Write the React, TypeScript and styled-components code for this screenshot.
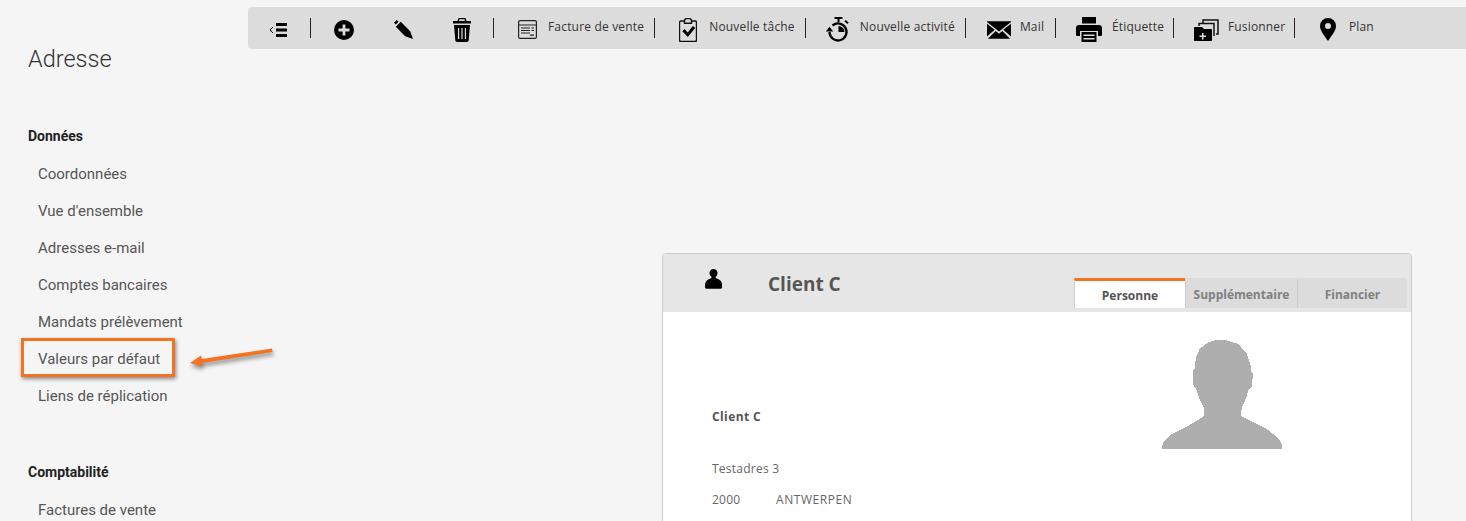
import * as React from "react"
import styled, { createGlobalStyle } from "styled-components"

const GlobalStyle = createGlobalStyle`
  html, body {
    margin: 0;
    padding: 0;
    background: #f5f5f5;
  }
`

const Page = styled.div`
  display: grid;
  grid-template-columns: 248px 1fr;
  height: 521px;
  overflow: hidden;
  background: #f5f5f5;
`

const Sidebar = styled.aside`
  position: relative;
  padding: 43px 0 0 28px;
  font-family: Roboto, sans-serif;
`

const PageTitle = styled.h1`
  margin: 0 0 51px;
  font-size: 23.5px;
  line-height: 32px;
  font-weight: 300;
  color: #333;
`

const SectionTitle = styled.h2`
  margin: 0;
  font-size: 14px;
  line-height: 20px;
  font-weight: 700;
  color: #222;
`

const NavList = styled.ul`
  list-style: none;
  margin: 10px 0 47px;
  padding: 0;
`

const NavItem = styled.li<{ $marked?: boolean }>`
  position: relative;
  padding-left: 10px;
  font-size: 15px;
  line-height: 37px;
  color: #555;

  ${({ $marked }) =>
    $marked &&
    `
    &::after {
      content: "";
      position: absolute;
      left: -7px;
      top: -3px;
      width: 148px;
      height: 33px;
      border: 3px solid #f47321;
      box-shadow: 1px 2px 4px rgba(0, 0, 0, 0.45);
    }
  `}
`

const Arrow = styled.svg`
  position: absolute;
  left: 184px;
  top: 343px;
  overflow: visible;
  filter: drop-shadow(1px 3px 2px rgba(0, 0, 0, 0.45));
`

const Main = styled.main`
  display: flex;
  flex-direction: column;
  align-items: flex-start;
  padding-top: 7px;
`

const Toolbar = styled.div`
  display: flex;
  align-items: center;
  width: 100%;
  height: 42px;
  background: #dcdcdc;
  border-radius: 4px 0 0 4px;
  font-family: "Open Sans", sans-serif;
  font-size: 12px;
  color: #333;
`

const Separator = styled.span<{ $offset?: number }>`
  flex: none;
  width: 1px;
  height: 20px;
  margin-left: ${({ $offset }) => $offset ?? 0}px;
  background: #222;
`

const IconGroup = styled.div`
  display: flex;
  padding-left: 3.5px;
`

const IconSlot = styled.span<{ $width: number }>`
  display: flex;
  flex: none;
  align-items: center;
  justify-content: center;
  width: ${({ $width }) => $width}px;
  height: 42px;
  padding-top: 3px;
  box-sizing: border-box;
`

const ToolButton = styled.div`
  display: flex;
  align-items: center;
  padding: 0 10px 0 13px;
`

const ToolLabel = styled.span<{ $gap: number; $width?: number }>`
  width: ${({ $width }) => ($width ? `${$width}px` : "auto")};
  margin: 0 0 4px ${({ $gap }) => $gap}px;
  white-space: nowrap;
  letter-spacing: 0.18px;
`

const Card = styled.section`
  width: 750px;
  height: 300px;
  margin: 204px 0 0 414px;
  flex: none;
  box-sizing: border-box;
  background: #fff;
  border: 1px solid #ccc;
  border-radius: 4px 4px 0 0;
  font-family: "Open Sans", sans-serif;
`

const CardHeader = styled.header`
  display: flex;
  align-items: flex-start;
  height: 58px;
  background: #e6e6e6;
  border-radius: 3px 3px 0 0;
`

const CardIcon = styled.span`
  display: flex;
  flex: none;
  justify-content: center;
  width: 101px;
  padding-top: 15px;
`

const CardTitle = styled.h2`
  flex: 1;
  margin: 16px 0 0 4px;
  font-size: 19px;
  line-height: 28px;
  font-weight: 700;
  color: #555;
`

const Tabs = styled.div`
  display: flex;
  margin: 24px 4px 0 0;
`

const Tab = styled.div<{ $active?: boolean; $width: number }>`
  width: ${({ $width }) => $width}px;
  height: 30px;
  box-sizing: border-box;
  border-top: 3px solid ${({ $active }) => ($active ? "#f47321" : "#dcdcdc")};
  border-left: 1px solid #ccc;
  background: ${({ $active }) => ($active ? "#fff" : "#dcdcdc")};
  color: ${({ $active }) => ($active ? "#555" : "#808080")};
  font-size: 12px;
  font-weight: 700;
  line-height: ${({ $active }) => ($active ? 30 : 28)}px;
  text-align: center;
  white-space: nowrap;
`

const CardBody = styled.div`
  display: flex;
  justify-content: space-between;
  align-items: flex-start;
  padding: 28px 129px 0 49px;
`

const Address = styled.div`
  padding-top: 68px;
  font-size: 12px;
  color: #666;
  letter-spacing: 0.25px;
`

const ClientName = styled.div`
  margin-bottom: 34px;
  line-height: 18px;
  font-weight: 700;
  color: #555;
  letter-spacing: 0.4px;
`

const AddressLine = styled.div`
  display: flex;
  line-height: 18px;
  margin-bottom: 13px;
`

const PostCode = styled.span`
  width: 64px;
`

const City = styled.span`
  letter-spacing: 0.55px;
`

const Iconic = styled.svg`
  display: block;
  flex: none;
  fill: #000;
`

const Silhouette = styled.svg`
  display: block;
  fill: #aeaeae;
`

const BackIcon = () => (
  <Iconic width="18" height="14" viewBox="0 0 18 14">
    <path d="M4 4 1 7l3 3" fill="none" stroke="#000" strokeWidth="1" />
    <path d="M7 0h11v3H7zM7 5.500h11v3H7zM7 11h11v3H7z" />
  </Iconic>
)

const PlusIcon = () => (
  <Iconic width="20" height="20" viewBox="0 0 20 20">
    <path d="M10 0a10 10 0 1 0 0 20 10 10 0 0 0 0-20zm1.400 4.500v4.100h4.100v2.800h-4.100v4.100H8.600v-4.100H4.500V8.600h4.100V4.500z" fillRule="evenodd" />
  </Iconic>
)

const PencilIcon = () => (
  <Iconic width="19" height="19" viewBox="0 0 19 19">
    <path d="M2.800 0 0 2.800 1.800 4.600l2.800-2.800zM6.800 1.800 1.800 6.800l9.400 9.400L19 19l-2.800-7.800z" />
  </Iconic>
)

const TrashIcon = () => (
  <Iconic width="18" height="24" viewBox="0 0 18 24">
    <path d="M5.500 0h7l1 3H18v2.500H0V3h4.500zM6.500 1.200 6 3h6l-.5-1.800zM1 7h16l-1.300 15.300c-.1 1-.8 1.700-1.800 1.700H4.100c-1 0-1.700-.7-1.800-1.700zm4 3v11h1.200V10zm3.400 0v11h1.200V10zm3.400 0v11H13V10z" fillRule="evenodd" />
  </Iconic>
)

const InvoiceIcon = () => (
  <Iconic width="19" height="19" viewBox="0 0 19 19">
    <rect x=".6" y=".6" width="17.800" height="17.800" rx="1.500" fill="none" stroke="#222" strokeWidth="1.200" />
    <path d="M1 4.500h17v1H1zM3 7.500h9v1H3zM13.500 7.500H16v1h-2.500zM3 10h9v1H3zM13.500 10H16v1h-2.500zM3 12.500h9v1H3zM12 14.500h4v1.200h-4z" fill="#222" />
  </Iconic>
)

const TaskIcon = () => (
  <Iconic width="18" height="24" viewBox="0 0 18 24">
    <path d="M5.500 3H2a1.500 1.500 0 0 0-1.500 1.500V22A1.500 1.500 0 0 0 2 23.500h14a1.500 1.500 0 0 0 1.500-1.500V4.500A1.500 1.500 0 0 0 16 3h-3.500" fill="none" stroke="#111" strokeWidth="1.400" />
    <path d="M5.500 3c0-1.400.8-2.400 2-2.400h3c1.200 0 2 1 2 2.400v2.200h-7z" fill="none" stroke="#111" strokeWidth="1.400" />
    <path d="m3.300 13.300 2.200-2.200 3.200 3.300 5.200-6.300 2.300 1.900-7.400 9z" />
  </Iconic>
)

const TimerIcon = () => (
  <Iconic width="25" height="26" viewBox="0 0 25 26">
    <path d="M8.500 0h8v2h-3v3h-2V2h-3z" />
    <path d="M6.500 8.500A8.500 8.500 0 1 1 3.500 15" fill="none" stroke="#000" strokeWidth="2.300" />
    <path d="M12.500 15V9a6 6 0 0 1 6 6z" />
    <path d="M-.2 14.500h7.400L3.500 9.800z" />
    <path d="m19.700 3 3 2.600-1.300 1.500-3-2.600z" />
  </Iconic>
)

const MailIcon = () => (
  <Iconic width="24" height="18" viewBox="0 0 25 18">
    <path d="M0 .6 12.500 10.500 25 .6V0H0zM0 2.500V15.800L8 8.800zM25 2.500V15.800L17 8.800zM1 18h23l-8-8-3.500 3L9 10z" />
  </Iconic>
)

const PrinterIcon = () => (
  <Iconic width="26" height="25" viewBox="0 0 26 25">
    <path d="M6 0h14v6.500H6zM3 8h20c1.700 0 3 1.300 3 3v7a1 1 0 0 1-1 1h-3v-5H4v5H1a1 1 0 0 1-1-1v-7c0-1.700 1.300-3 3-3zM5.500 15h15v10h-15zM7.500 17.500V19h11v-1.500zm0 3.500v1.500h11V21z" fillRule="evenodd" />
  </Iconic>
)

const MergeIcon = () => (
  <Iconic width="25" height="22" viewBox="0 0 25 22">
    <path d="M9 4V1h15v14h-2" fill="none" stroke="#111" strokeWidth="1.500" />
    <path d="M5 7V4.500h15V17" fill="none" stroke="#111" strokeWidth="1.500" />
    <path d="M1 8h7l2 2h7c.6 0 1 .4 1 1v10c0 .6-.4 1-1 1H1c-.6 0-1-.4-1-1V9c0-.6.4-1 1-1zm7 6v2.500H5.500V18H8v2.500h1.500V18H12v-1.500H9.500V14z" fillRule="evenodd" />
  </Iconic>
)

const PinIcon = () => (
  <Iconic width="16" height="23" viewBox="0 0 16 23">
    <path d="M8 0a8 8 0 0 0-8 8c0 5 5.500 11 8 15 2.500-4 8-10 8-15a8 8 0 0 0-8-8zm0 5a3 3 0 1 1 0 6 3 3 0 0 1 0-6z" fillRule="evenodd" />
  </Iconic>
)

const PersonIcon = () => (
  <Iconic width="17" height="20" viewBox="0 0 17 20">
    <path d="M8.500 0c2.500 0 4 1.700 4 4 0 1.600-.7 3-1.800 3.800-.2.500 0 1.200.5 1.500 2.500 1 5.300 2.200 5.800 5.700.1.900.2 2 .2 3 0 1-.6 1.700-1.600 1.700H1.400C.4 19.700 0 19 0 18c0-1 .1-2.100.2-3 .5-3.500 3.300-4.700 5.800-5.700.5-.3.700-1 .5-1.500C5.200 7 4.500 5.600 4.500 4c0-2.300 1.500-4 4-4z" />
  </Iconic>
)

const groups = [
  {
    title: "Données",
    items: [
      "Coordonnées",
      "Vue d'ensemble",
      "Adresses e-mail",
      "Comptes bancaires",
      "Mandats prélèvement",
      "Valeurs par défaut",
      "Liens de réplication",
    ],
  },
  { title: "Comptabilité", items: ["Factures de vente"] },
]

const tools = [
  { label: "Facture de vente", Icon: InvoiceIcon, gap: 1 },
  { label: "Nouvelle tâche", Icon: TaskIcon, gap: 1 },
  { label: "Nouvelle activité", Icon: TimerIcon, gap: 1 },
  { label: "Mail", Icon: MailIcon, gap: 1, width: 25 },
  { label: "Étiquette", Icon: PrinterIcon, gap: 3, width: 51 },
  { label: "Fusionner", Icon: MergeIcon, gap: 1, width: 56 },
]

const App = () => (
  <>
    <GlobalStyle />
    <Page>
      <Sidebar>
        <PageTitle>Adresse</PageTitle>
        {groups.map(group => (
          <React.Fragment key={group.title}>
            <SectionTitle>{group.title}</SectionTitle>
            <NavList>
              {group.items.map(item => (
                <NavItem key={item} $marked={item === "Valeurs par défaut"}>
                  {item}
                </NavItem>
              ))}
            </NavList>
          </React.Fragment>
        ))}
        <Arrow width="90" height="30" viewBox="0 0 90 30">
          <path d="M88 5.500 18 16l-1-3.500L6 20l12.500 3.500-.5-3.500L88.500 9z" fill="#f47321" />
        </Arrow>
      </Sidebar>
      <Main>
        <Toolbar>
          <IconSlot $width={60}>
            <BackIcon />
          </IconSlot>
          <Separator $offset={2} />
          <IconGroup>
            <IconSlot $width={59}>
              <PlusIcon />
            </IconSlot>
            <IconSlot $width={59}>
              <PencilIcon />
            </IconSlot>
            <IconSlot $width={59}>
              <TrashIcon />
            </IconSlot>
          </IconGroup>
          <Separator $offset={1.5} />
          {tools.map(({ label, Icon, gap, width }) => (
            <React.Fragment key={label}>
              <ToolButton>
                <IconSlot $width={40}>
                  <Icon />
                </IconSlot>
                <ToolLabel $gap={gap} $width={width}>{label}</ToolLabel>
              </ToolButton>
              <Separator />
            </React.Fragment>
          ))}
          <ToolButton>
            <IconSlot $width={40}>
              <PinIcon />
            </IconSlot>
            <ToolLabel $gap={1}>Plan</ToolLabel>
          </ToolButton>
        </Toolbar>
        <Card>
          <CardHeader>
            <CardIcon>
              <PersonIcon />
            </CardIcon>
            <CardTitle>Client C</CardTitle>
            <Tabs>
              <Tab $active $width={111}>Personne</Tab>
              <Tab $width={112}>Supplémentaire</Tab>
              <Tab $width={110}>Financier</Tab>
            </Tabs>
          </CardHeader>
          <CardBody>
            <Address>
              <ClientName>Client C</ClientName>
              <AddressLine>Testadres 3</AddressLine>
              <AddressLine>
                <PostCode>2000</PostCode>
                <City>ANTWERPEN</City>
              </AddressLine>
            </Address>
            <Silhouette width="120" height="109" viewBox="36 30 360 327" shapeRendering="crispEdges">
              <path d="M195 30h30l40 12 25 28 13 40-1 15 6 5-1 40-12 10-7 25-13 30-2 23 27 14 50 25 35 28 11 20v12H36l2-17 22-25 50-25 53-32v-23l-15-30-8-25-10-15-2-40 7-10 2-30 13-30 25-18z" />
            </Silhouette>
          </CardBody>
        </Card>
      </Main>
    </Page>
  </>
)

export default App
